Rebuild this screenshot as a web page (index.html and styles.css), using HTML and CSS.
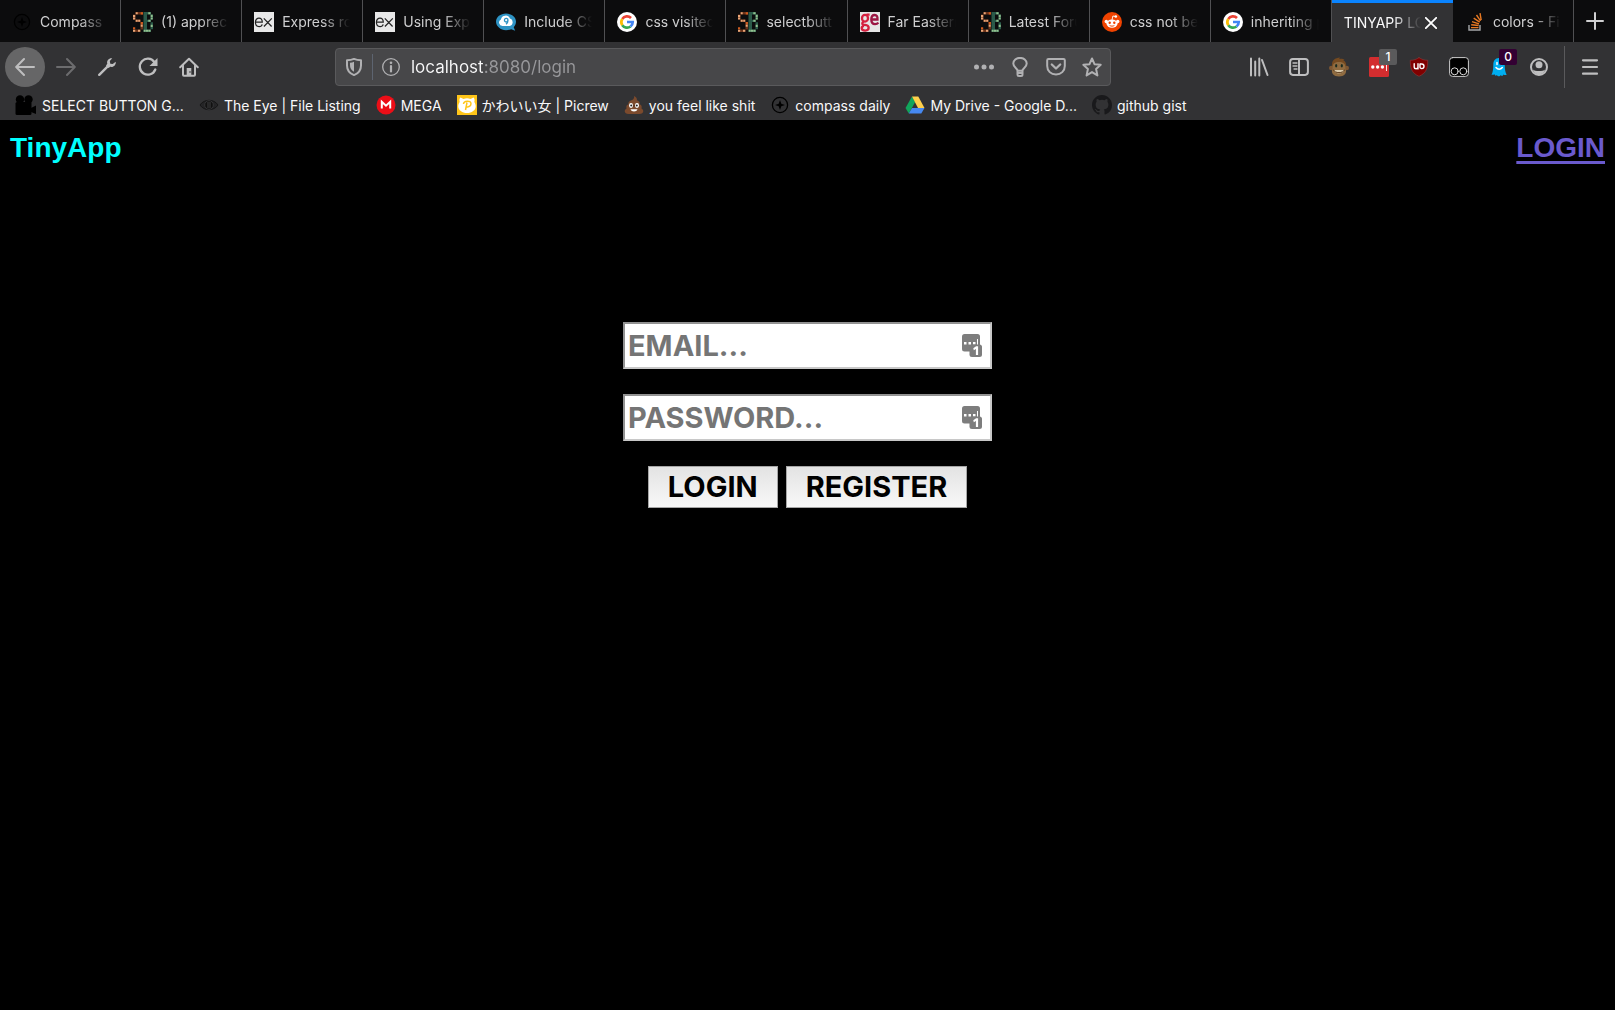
FILE: index.html
```html
<!DOCTYPE html>
<html lang="en">
<head>
<meta charset="utf-8">
<title>TINYAPP LOGIN</title>
<link rel="stylesheet" href="styles.css">
</head>
<body>
<svg class="sprite" aria-hidden="true">
  <symbol id="compass" viewBox="0 0 20 20"><circle cx="10" cy="10" r="7.6" fill="none" stroke="currentColor" stroke-width="1.3"/><path d="M10 5l1.3 3.7L15 10l-3.7 1.3L10 15l-1.3-3.7L5 10l3.7-1.3z" fill="currentColor"/></symbol>
  <symbol id="sb" viewBox="0 0 20 20">
    <path fill="#6b3219" d="M2.5 0H10v2.5H2.5zM0 2.5h2.5v5H0zM2.500 7.500h5v2.500h-5zM7.500 10H10v7.500H7.500zM0 17.500h7.500V20H0z"/>
    <path fill="#e8a678" d="M0 3h2.200v2H0zM2.700 .3h2v2h-2zM0 5.500h2.200v2H0zM2.700 7.700h2v2h-2zM5.200 7.700h2v2h-2zM7.700 12.500h2v2.200h-2zM0 17.700h2.200v2H0zM5 17.700h2.200v2H5z"/>
    <path fill="#cf5b1f" d="M7.700.2H10v2.200H7.700zM7.700 10h2.200v2.200H7.700zM0 15.200h2.200v2H0z"/>
    <path fill="#2a5a49" d="M10.500 0H18v2.500h-7.500zM10.500 2.500h3.500v15h-3.500zM17.500 2.500H20v5h-2.500zM10.500 7.700H18V10h-7.500zM17.500 10.300H20v7h-2.500zM10.500 17.500H18V20h-7.500z"/>
    <path fill="#93c18f" d="M15.300.2h2.200v2h-2.200zM17.700 2.800h2V5h-2zM17.700 5.400h2v2h-2zM15.300 7.700h2.200v2h-2.200zM17.700 12.700h2v2.200h-2zM15.300 17.700h2.200v2h-2.200zM13 17.700h2v2h-2zM10.700 17.700h2v2h-2z"/>
  </symbol>
  <symbol id="ex" viewBox="0 0 20 20"><path fill="#e8e8e8" d="M0 0h20v20H0z"/><path d="M1.500 10.200h6.800C8.300 7.500 7 6.100 5 6.100S1.400 7.700 1.400 10.300s1.500 4.300 3.700 4.300c1.600 0 2.700-.8 3.100-2.300M9.800 6.300l7.800 8.200M17.800 6.300l-7.900 8.200" fill="none" stroke="#222" stroke-width="1.200"/></symbol>
  <symbol id="google" viewBox="0 0 20 20"><circle cx="10" cy="10" r="10" fill="#fff"/><g fill="none" stroke-width="2.700"><path d="M5.300 6.900A5.700 5.700 0 0 1 14 5.900" stroke="#ea4335"/><path d="M5.300 6.900a5.700 5.700 0 0 0 0 6.300" stroke="#fbbc05"/><path d="M5.300 13.200a5.700 5.700 0 0 0 8.200 1.300" stroke="#34a853"/><path d="M10 10h5.700a5.700 5.700 0 0 1-2.200 4.500" stroke="#4285f4"/></g></symbol>
  <symbol id="fieldkey" viewBox="0 0 20 23"><rect width="18" height="17.500" rx="2.500" fill="#7d7d7d"/><path d="M2 8h2.500v2.500H2zM6.500 8H9v2.500H6.500zM11 8h2.500v2.500H11zM15 5h1v6h-1z" fill="#fff"/><rect x="7.500" y="10.500" width="12.500" height="12.500" rx="2.500" fill="#7d7d7d"/><path d="M11.300 14.300l2.800-2h2V21h-2.200v-6l-2.100 1.200z" fill="#fff"/></symbol>
</svg>

<header class="browser">
  <div class="tabs" role="tablist">
    <button class="tab" role="tab"><svg class="icon black"><use href="#compass"/></svg><span>Compass |</span></button>
    <button class="tab" role="tab"><svg class="icon"><use href="#sb"/></svg><span>(1) apprec</span></button>
    <button class="tab" role="tab"><svg class="icon"><use href="#ex"/></svg><span>Express ro</span></button>
    <button class="tab" role="tab"><svg class="icon"><use href="#ex"/></svg><span>Using Expr</span></button>
    <button class="tab" role="tab"><svg class="icon" viewBox="0 0 20 20"><path d="M10 1.500c5.600 0 10 3.500 10 8 0 2.600-1 4.300-2.300 5.700l1.500 3.500-4-1.500c-1.500.6-3.300 1-5.200 1C4.500 18.200 0 14 0 9.700c0-4.600 4.500-8.200 10-8.200z" fill="#2e93c4"/><path d="M6.500 14a3.500 3.500 0 0 1-1.600-6.600A4.800 4.800 0 0 1 14 6.500a3.900 3.900 0 0 1-.3 7.500z" fill="#fff"/><path d="M12 8.300a1.800 1.800 0 1 0-2.500 1.500c1 .4 2.100-.2 2.500-1.500zm0 0c0 2.200-.7 3.200-2 4" fill="none" stroke="#2e93c4" stroke-width="1.300"/></svg><span>Include CS</span></button>
    <button class="tab" role="tab"><svg class="icon"><use href="#google"/></svg><span>css visited</span></button>
    <button class="tab" role="tab"><svg class="icon"><use href="#sb"/></svg><span>selectbutt</span></button>
    <button class="tab" role="tab"><svg class="icon" viewBox="0 0 20 20"><path fill="#e6e6e6" d="M0 0h20v20H0z"/><g fill="none" stroke-width="2.300"><g stroke="#d5203f"><ellipse cx="5" cy="6.200" rx="3" ry="3.400"/><path d="M9.600 2.600H6.500M3.500 9.700c-2.300 2.200-1 3 1.500 3.200 5 .4 4.700 5.600.3 5.700-4.500.1-4.600-4-1.300-4.700"/></g><path d="M11.500 7.500h6C17.700 4.600 16.700 3 14.700 3c-2.300 0-3.400 2-3.400 4.500s1.300 4.600 3.800 4.600c1.400 0 2.500-.5 3.300-1.500" stroke="#9c1744"/></g></svg><span>Far Eastern</span></button>
    <button class="tab" role="tab"><svg class="icon"><use href="#sb"/></svg><span>Latest Foru</span></button>
    <button class="tab" role="tab"><svg class="icon" viewBox="0 0 20 20"><circle cx="10" cy="10" r="10" fill="#f04300"/><g fill="#fff"><ellipse cx="10" cy="11.600" rx="5.600" ry="4.200"/><circle cx="4.300" cy="9.500" r="1.700"/><circle cx="15.700" cy="9.500" r="1.700"/><circle cx="13.800" cy="4.500" r="1.300"/></g><path d="M10 8l.9-4 2.500.5" fill="none" stroke="#fff" stroke-width=".9"/><circle cx="7.700" cy="10.800" r="1.200" fill="#f04300"/><circle cx="12.300" cy="10.800" r="1.200" fill="#f04300"/><path d="M7.600 13.400c1.400 1 3.400 1 4.800 0" fill="none" stroke="#f04300"/></svg><span>css not be</span></button>
    <button class="tab" role="tab"><svg class="icon"><use href="#google"/></svg><span>inheriting p</span></button>
    <button class="tab active" role="tab" aria-selected="true"><span>TINYAPP LO</span><svg class="close" viewBox="0 0 12 12"><path d="M.8.800l10.400 10.400M11.200.800L.8 11.200" stroke="#fff" stroke-width="1.800" stroke-linecap="round"/></svg></button>
    <button class="tab" role="tab"><svg class="icon" viewBox="0 0 20 20"><path d="M4 13v5h11v-5" fill="none" stroke="#a5a7a9" stroke-width="1.400"/><path d="M6 15.600h7.500M6.200 12.700l7.400.8M7 9.600l7 2.200M8.700 6.200l6 4M11.500 3l4 5.800M15 1.200l1.200 7" stroke="#e87922" stroke-width="1.400"/></svg><span>colors - Fin</span></button>
    <button class="new-tab" aria-label="New tab"><svg viewBox="0 0 18 18"><path d="M9 1v16M1 9h16" stroke="#d0d0d1" stroke-width="2" stroke-linecap="round"/></svg></button>
  </div>

  <div class="toolbar">
    <div class="nav">
      <button class="back" aria-label="Back"><svg class="icon" viewBox="0 0 20 20"><path d="M19 10H1.500M9 2L1.200 10 9 18" /></svg></button>
      <button class="dim" aria-label="Forward"><svg class="icon" viewBox="0 0 20 20"><path d="M1 10h17.500M11 2l7.800 8-7.800 8"/></svg></button>
      <button aria-label="Tools"><svg class="icon" viewBox="0 0 20 20"><path d="M2.200 17.800l9-9" stroke-width="2.400"/><path d="M15.300 1.300c-3.200-.6-6 2.300-5 5.500L9 8.400 11.600 11l1.700-1.200c3.200.8 6-2 5.400-5.100l-3 2.400-2.400-.4-.5-2.600z" fill="#bebebf" stroke="none"/></svg></button>
      <button aria-label="Reload"><svg class="icon" viewBox="0 0 20 20"><path d="M17.300 12.500a8 8 0 1 1-1-7.500" stroke-width="2.300"/><path d="M19.500 1v8h-8z" fill="#bebebf" stroke="none"/></svg></button>
      <button aria-label="Home"><svg class="icon" viewBox="0 0 20 20"><path d="M1.200 10.300L10 1.700l8.800 8.600M4 8.500v9.300c0 .6.300.9.900.9h10.200c.6 0 .9-.3.900-.9V8.500"/><path d="M7.700 11h4.600v7.500H7.700z" fill="#bebebf" stroke="none"/><path d="M11 14.500v1" stroke="#323234" stroke-width="1"/></svg></button>
    </div>
    <div class="urlbar">
      <svg class="icon" viewBox="0 0 20 20"><path d="M10 1.900c2.300 1 4.600 1.300 7 1.300v5.200c0 4.700-2.200 7.700-7 9.700-4.800-2-7-5-7-9.700V3.200c2.400 0 4.700-.3 7-1.300z"/><path d="M10 4.800v10c-2.700-1.500-4-3.500-4-6.800V5.800c1.500-.1 2.800-.4 4-1z" fill="#b1b1b3" stroke="none"/></svg>
      <i class="divider"></i>
      <svg class="icon" viewBox="0 0 20 20"><circle cx="10" cy="10" r="8.300" stroke-width="1.300"/><path d="M10 9v5.500" stroke-width="2.200"/><circle cx="10" cy="5.800" r="1.300" fill="#b1b1b3" stroke="none"/></svg>
      <input class="address" type="text" aria-label="Address" value="localhost:8080/login">
      <div class="actions">
        <button aria-label="Page actions"><svg class="icon" viewBox="0 0 20 20"><g class="solid"><circle cx="2.500" cy="10" r="2.500"/><circle cx="10" cy="10" r="2.500"/><circle cx="17.500" cy="10" r="2.500"/></g></svg></button>
        <button aria-label="Tip"><svg class="icon" viewBox="0 0 20 20"><path d="M7.500 13.800c0-2.500-4.200-3.300-4.200-7.200a6.700 5.700 0 0 1 13.400 0c0 3.900-4.200 4.700-4.200 7.200zM7.500 13v4.500c0 1 .5 1.500 1.500 1.500h2c1 0 1.500-.5 1.500-1.500V13M7.500 16h5"/></svg></button>
        <button aria-label="Save to Pocket"><svg class="icon" viewBox="0 0 20 20"><path d="M2.500 2h15c.8 0 1.300.5 1.300 1.300V9c0 5-3.700 8.500-8.800 8.500S1.200 14 1.200 9V3.300C1.200 2.500 1.700 2 2.500 2z"/><path d="M5.800 7.500L10 11.500l4.200-4" stroke-width="2.300"/></svg></button>
        <button aria-label="Bookmark"><svg class="icon" viewBox="0 0 20 20"><path d="M10 1.500l2.500 5.700 6.200.6-4.600 4.200 1.300 6.400-5.400-3.300-5.400 3.300L5.900 12 1.300 7.800l6.200-.6z"/></svg></button>
      </div>
    </div>
    <div class="extensions">
      <button aria-label="Library"><svg class="icon" viewBox="0 0 20 20"><path d="M2 1.500v17M6.200 4.500v14M10.300 1.500v17M13 3l5.500 15"/></svg></button>
      <button aria-label="Sidebar"><svg class="icon" viewBox="0 0 20 20"><rect x="1.100" y="2.100" width="17.800" height="15.800" rx="2.800"/><path d="M10 2v16"/><path d="M4 6h4M4 9h4M5 12h3" stroke-width="1.300"/></svg></button>
      <button aria-label="Greasemonkey"><svg class="icon" viewBox="0 0 20 20"><g stroke="none"><path d="M3 9C2.500 3 6 1 11 .5l-.8 1.600c2.300-.5 4-.4 5.300.2l-1.300.6c2.400 1.500 3.200 3.700 3 6.500z" fill="#754a20"/><circle cx="2.300" cy="11" r="2.300" fill="#7d5732"/><circle cx="17.700" cy="11" r="2.300" fill="#7d5732"/><path d="M10 5c5 0 6.700 2.500 6.300 6 2.500 5.500-1.300 8.500-6.300 8.500S1.200 16.500 3.700 11C3.300 7.500 5 5 10 5z" fill="#8f6b40"/><path d="M5 13h10c.5 4-9.500 5-10 0z" fill="#d9c9aa"/><ellipse cx="7.200" cy="8.800" rx="1.100" ry="1.800" fill="#192c20"/><ellipse cx="12.800" cy="8.800" rx="1.100" ry="1.800" fill="#192c20"/></g><path d="M4.500 13c1.500 3.700 9.500 3.700 11 0" stroke="#573516" stroke-width="1"/></svg></button>
      <button class="badged" aria-label="LastPass"><svg class="icon" viewBox="0 0 20 20"><g stroke="none"><rect width="20" height="20" rx="1.500" fill="#d32d2f"/><g fill="#fff"><circle cx="3.800" cy="10" r="1.700"/><circle cx="8.600" cy="10" r="1.700"/><circle cx="13.400" cy="10" r="1.700"/><path d="M17 7h.9v7H17z"/></g></g></svg><span class="badge">1</span></button>
      <button aria-label="uBlock Origin"><svg class="icon" viewBox="0 0 20 20"><path d="M10 .7c2.400 1.700 5.500 2.600 8.700 2.600 0 7.700-1 12.500-8.700 16C2.300 15.800 1.300 11 1.300 3.300 4.500 3.300 7.600 2.400 10 .7z" fill="#800000" stroke="#a43b3b" stroke-width=".5"/><path d="M5.200 6.700v3.500c0 2 3.800 2 3.800 0V6.700v5.200M11.300 7h1.400a2.300 2.300 0 1 1 0 4.600 1.700 1.700 0 0 1-1.700-1.700V7" stroke="#fff" stroke-width="1.400"/></svg></button>
      <button aria-label="Tampermonkey"><svg class="icon" viewBox="0 0 20 20"><rect x=".6" y=".6" width="18.800" height="18.800" rx="3" fill="#000" stroke="#ccc" stroke-width="1"/><circle cx="5.700" cy="14.300" r="3.500" stroke="#ddd" stroke-width="1"/><circle cx="14.300" cy="14.300" r="3.500" stroke="#ddd" stroke-width="1"/></svg></button>
      <button class="badged" aria-label="Ghostery"><svg class="icon" viewBox="0 0 20 20"><path d="M10 1C6 1 4.300 4 4.300 7.500c0 5-.6 8-1.800 10.200 1.300.2 2.100 0 2.900-.5.600 1.500 1.600 2 2.400.8.900 1.600 3.100 1.800 4 0 .9 1.300 2 1.200 2.700-.5.900.7 1.900.8 3.200.3-1.300-2.300-2-5.300-2-10.300C15.700 4 14 1 10 1z" fill="#00aef0" stroke="none"/><path d="M8 5.500v2M12.500 5.500v2M7 10.500c1.800 2.200 4.500 2.200 6.300 0" stroke="#fff" stroke-width="1.500"/></svg><span class="badge purple">0</span></button>
      <button aria-label="Account"><svg class="icon" viewBox="0 0 20 20"><circle cx="10" cy="10" r="8"/><circle cx="10" cy="7.800" r="3.500" fill="#bebebf" stroke="none"/><path d="M4 12.500c1.500 2 10.500 2 12 0-1 6.500-11 6.500-12 0z" fill="#bebebf" stroke="none"/></svg></button>
    </div>
    <button class="menu" aria-label="Menu"><svg class="icon" viewBox="0 0 20 20"><path d="M3 3.300h14M3 10h14M3 16.700h14" stroke-width="2.200"/></svg></button>
  </div>

  <nav class="bookmarks">
    <a href="#"><svg class="icon wide" viewBox="0 0 22 20"><circle cx="5" cy="4.500" r="4.200"/><circle cx="13.500" cy="4.500" r="4.200"/><rect x=".5" y="7" width="16" height="13" rx="1.500"/><path d="M16 13l5-2.500V19l-5-2z"/></svg>SELECT BUTTON G...</a>
    <a href="#"><svg class="icon" viewBox="0 0 20 20"><path d="M1 10c4-6.300 14-6.300 18 0-4 6.300-14 6.300-18 0z" fill="#242426" stroke="#161617" stroke-width="1"/><circle cx="10" cy="10" r="4.300" fill="#111" stroke="#353537"/><path d="M8 8h4M8 10h4M8 12h4" stroke="#424244"/></svg>The Eye | File Listing</a>
    <a href="#"><svg class="icon" viewBox="0 0 20 20"><circle cx="10" cy="10" r="9.500" fill="#ec0e17"/><path d="M5.800 13.500V6.800L10 10.700l4.200-3.900v6.700" fill="none" stroke="#fff" stroke-width="2"/></svg>MEGA</a>
    <a href="#" lang="ja"><svg class="icon" viewBox="0 0 20 20"><path fill="#ffc519" d="M0 0h20v20H0z"/><path d="M3.500 2.500l3 1.500q3.500-1.300 7 0l3-1.500c1.300 1 1.200 3 .8 4.500 4 6-1 11-7.300 11s-11.300-5-7.300-11c-.4-1.500-.5-3.500.8-4.500z" fill="#fff"/><path d="M6.500 9c.3-3.500 7.500-4 7.500-.2 0 3-3.500 3.500-5 2.700M10 7.500L8.500 15" fill="none" stroke="#ffc519" stroke-width="1.500"/></svg>かわいい女 | Picrew</a>
    <a href="#"><svg class="icon" viewBox="0 0 20 20"><path d="M10 1c2.300.8 3.300 2.700 2.800 4.300 2.300.6 3.300 2.300 2.700 4 2 .6 2.700 2.400 1.800 4C21 16 19 19 15.500 19h-11C1 19-1 16 2.700 13.300c-.9-1.600-.2-3.400 1.800-4-.6-2 .8-3.500 3-4C9.500 4.500 10.500 3 10 1z" fill="#7b4a2d"/><path d="M5 10.500c3 1.200 6 .5 8.500-1" fill="none" stroke="#59311b"/><ellipse cx="7" cy="10.500" rx="2" ry="2.400" fill="#fff"/><ellipse cx="13" cy="10.500" rx="2" ry="2.400" fill="#fff"/><circle cx="7.200" cy="10.600" r="1" fill="#222"/><circle cx="12.800" cy="10.600" r="1" fill="#222"/><path d="M6.500 14.300h7c-1 3-6 3-7 0z" fill="#fff"/></svg>you feel like shit</a>
    <a href="#"><svg class="icon black"><use href="#compass"/></svg>compass daily</a>
    <a href="#"><svg class="icon" viewBox="0 0 20 20"><path d="M7 1.500L.5 13l3.300 5.500L10.200 7z" fill="#11a55b"/><path d="M7 1.500h6.300L19.500 13H13z" fill="#ffd04b"/><path d="M7 13h12.500l-3.200 5.500H3.800z" fill="#4688f1"/></svg>My Drive - Google D...</a>
    <a href="#"><svg class="icon" viewBox="0 0 16 16"><path fill="#19191b" d="M8 0C3.580 0 0 3.580 0 8c0 3.540 2.290 6.530 5.470 7.590.4.070.55-.17.55-.38 0-.19-.01-.82-.01-1.490-2.010.37-2.530-.49-2.690-.94-.09-.23-.48-.94-.82-1.130-.28-.15-.68-.52-.01-.53.63-.01 1.080.58 1.230.82.72 1.210 1.870.87 2.330.66.070-.52.28-.87.51-1.070-1.780-.2-3.640-.89-3.640-3.950 0-.87.31-1.590.82-2.150-.08-.2-.36-1.020.08-2.120 0 0 .67-.21 2.200.82a7.500 7.500 0 0 1 4 0c1.530-1.040 2.200-.82 2.200-.82.44 1.100.16 1.920.08 2.120.51.56.82 1.270.82 2.150 0 3.070-1.870 3.750-3.650 3.950.29.25.54.73.54 1.480 0 1.070-.01 1.930-.01 2.200 0 .21.15.46.55.38A8 8 0 0 0 16 8c0-4.420-3.580-8-8-8z"/></svg>github gist</a>
  </nav>
</header>

<div class="site-header">
  <h1>TinyApp</h1>
  <a href="#login">LOGIN</a>
</div>

<main>
  <form class="login" id="login">
    <label class="field"><input type="email" placeholder="EMAIL..." aria-label="Email"><svg class="key"><use href="#fieldkey"/></svg></label>
    <label class="field"><input type="password" placeholder="PASSWORD..." aria-label="Password"><svg class="key"><use href="#fieldkey"/></svg></label>
    <div class="buttons">
      <button type="button">LOGIN</button>
      <button type="button">REGISTER</button>
    </div>
  </form>
</main>
</body>
</html>
```
FILE: styles.css
```css
* { box-sizing: border-box; }

body {
  margin: 0;
  min-height: 100vh;
  background: #000;
  font-family: Inter, "Noto Sans CJK JP", sans-serif;
}

button {
  margin: 0;
  padding: 0;
  border: 0;
  background: none;
  font: inherit;
  color: inherit;
}

.sprite { display: none; }

.icon {
  display: block;
  flex: none;
  width: 20px;
  height: 20px;
}

.black { color: #000; }

.browser {
  background: #323234;
  color: #f9f9fa;
  font-size: 14px;
}

/* tab strip */
.tabs {
  display: flex;
  height: 42px;
  background: #0c0c0d;
}

.tab {
  display: flex;
  flex: 1 1 0;
  align-items: center;
  gap: 8px;
  min-width: 0;
  padding: 1px 12px 0;
  border-right: 1px solid #505052;
  color: #cfcfd0;
  text-align: left;
}

.tab span {
  flex: 1;
  min-width: 0;
  overflow: hidden;
  white-space: nowrap;
  mask-image: linear-gradient(to left, transparent, #000 28px);
}

.tab.active {
  gap: 4px;
  padding: 0 13px 0 12px;
  border-top: 3px solid #0a84ff;
  border-right: 0;
  background: #323234;
  color: #f9f9fa;
}

.close {
  width: 12px;
  height: 12px;
  margin-right: 3px;
}

.new-tab {
  display: grid;
  flex: none;
  place-items: center;
  width: 41px;
}

.new-tab svg {
  width: 18px;
  height: 18px;
}

/* toolbar */
.toolbar {
  display: flex;
  align-items: center;
  height: 50px;
  padding-left: 5px;
}

.toolbar .icon {
  fill: none;
  stroke: #bebebf;
  stroke-width: 2;
  stroke-linecap: round;
  stroke-linejoin: round;
}

.toolbar .solid {
  fill: #b1b1b3;
  stroke: none;
}

.nav, .extensions, .actions {
  display: flex;
  align-items: center;
}

.nav button, .extensions button {
  display: grid;
  place-items: center;
  width: 40px;
  height: 40px;
}

.nav { gap: 1px; }

.nav .back {
  border-radius: 50%;
  background: #666667;
}

.toolbar .dim .icon { stroke: #6c6c6e; }

.urlbar {
  display: flex;
  flex: 1;
  align-items: center;
  height: 38px;
  margin: 0 128px 0 126px;
  padding: 0 8px;
  border: 1px solid #5a5a5c;
  border-radius: 4px;
  background: #474749;
}

.toolbar .urlbar .icon { stroke: #b1b1b3; }

.divider {
  width: 1px;
  height: 26px;
  margin: 0 8px;
  background: #5d6470;
}

.address {
  flex: 1;
  min-width: 0;
  height: 30px;
  margin-left: 10px;
  padding: 0;
  border: 0;
  outline: 0;
  background: linear-gradient(to right, #f9f9fa 73px, #98989b 73px) text;
  color: #f9f9fa;
  -webkit-text-fill-color: transparent;
  font: 400 17px Inter, sans-serif;
}

.actions { gap: 16px; }

.badged { position: relative; }

.badge {
  position: absolute;
  top: 2px;
  right: 2px;
  width: 18px;
  height: 16px;
  border-radius: 2px;
  background: #5a5a5b;
  color: #fff;
  font-size: 12px;
  font-weight: 500;
  line-height: 16px;
  text-align: center;
}

.purple { background: #330033; }

.menu {
  display: grid;
  place-items: center;
  width: 51px;
  height: 42px;
  margin-left: 5px;
  border-left: 1px solid #5a5a5c;
}

/* bookmarks */
.bookmarks {
  display: flex;
  gap: 15px;
  height: 28px;
  padding: 0 15px 2px;
}

.bookmarks a {
  display: flex;
  align-items: center;
  gap: 5px;
  color: inherit;
  text-decoration: none;
  white-space: nowrap;
}

.bookmarks .wide { width: 22px; }

/* page */
.site-header {
  display: flex;
  align-items: center;
  justify-content: space-between;
  height: 56px;
  padding: 0 10px;
  font: 700 28px "Liberation Sans", sans-serif;
}

.site-header h1 {
  margin: 0;
  color: #0ff;
  font-size: 28px;
}

.site-header a {
  color: #6a5acd;
  text-decoration-thickness: 3px;
  text-underline-offset: 4px;
}

.login {
  display: flex;
  flex-direction: column;
  align-items: center;
  gap: 25px;
  margin-top: 146px;
  font-size: 29px;
  font-weight: 700;
}

.field {
  position: relative;
  width: 369px;
}

.field input {
  display: block;
  width: 100%;
  height: 47px;
  padding: 0 44px 0 3px;
  border: 2px solid;
  border-color: #929292 #c8c8c8 #c8c8c8 #929292;
  background: #fff;
  font: inherit;
}

.field input::placeholder {
  color: #757575;
  opacity: 1;
}

.key {
  position: absolute;
  top: 12px;
  right: 10px;
  width: 20px;
  height: 23px;
}

.buttons {
  display: flex;
  gap: 8px;
}

.buttons button {
  height: 42px;
  padding: 0 19px 2px;
  border: 1px solid #a6a6a6;
  background: linear-gradient(#e3e3e3, #f8f8f8);
  color: #000;
}
```
